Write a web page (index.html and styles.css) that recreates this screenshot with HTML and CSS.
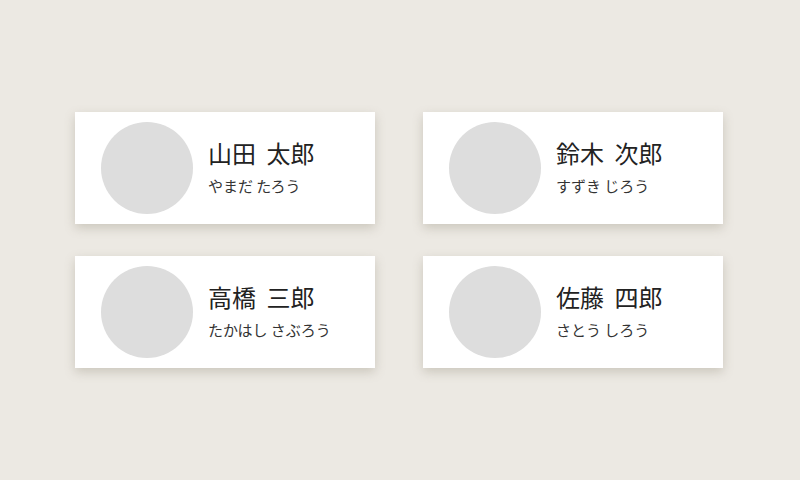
FILE: index.html
```html
<!DOCTYPE html>
<html lang="ja">
<head>
<meta charset="utf-8">
<link rel="stylesheet" href="styles.css">
</head>
<body>
<div class="grid">
  <div class="card"><div class="avatar"></div><div class="info"><div class="name">山田 太郎</div><div class="kana">やまだ たろう</div></div></div>
  <div class="card"><div class="avatar"></div><div class="info"><div class="name">鈴木 次郎</div><div class="kana">すずき じろう</div></div></div>
  <div class="card"><div class="avatar"></div><div class="info"><div class="name">高橋 三郎</div><div class="kana">たかはし さぶろう</div></div></div>
  <div class="card"><div class="avatar"></div><div class="info"><div class="name">佐藤 四郎</div><div class="kana">さとう しろう</div></div></div>
</div>
</body>
</html>
```
FILE: styles.css
```css
html, body {
  margin: 0;
  height: 100%;
}
body {
  background: #ece9e3;
  font-family: "Noto Sans CJK JP", "Noto Sans", sans-serif;
  padding: 112px 0 0 75px;
  box-sizing: border-box;
}
.grid {
  display: grid;
  grid-template-columns: 300px 300px;
  column-gap: 48px;
  row-gap: 32px;
}
.card {
  height: 112px;
  background: #fff;
  display: flex;
  align-items: center;
  padding: 0 0 0 26px;
  gap: 15px;
  box-sizing: border-box;
  box-shadow: 0 4px 10px rgba(120, 110, 90, 0.28);
}
.avatar {
  width: 92px;
  height: 92px;
  border-radius: 50%;
  background: #dddddd;
  flex: none;
}
.info {
  display: flex;
  flex-direction: column;
  padding-bottom: 3px;
}
.name {
  font-size: 24px;
  line-height: 31px;
  color: #222;
  word-spacing: 5px;
}
.kana {
  font-size: 15px;
  line-height: 20px;
  color: #333;
  margin-top: 8px;
}
```
